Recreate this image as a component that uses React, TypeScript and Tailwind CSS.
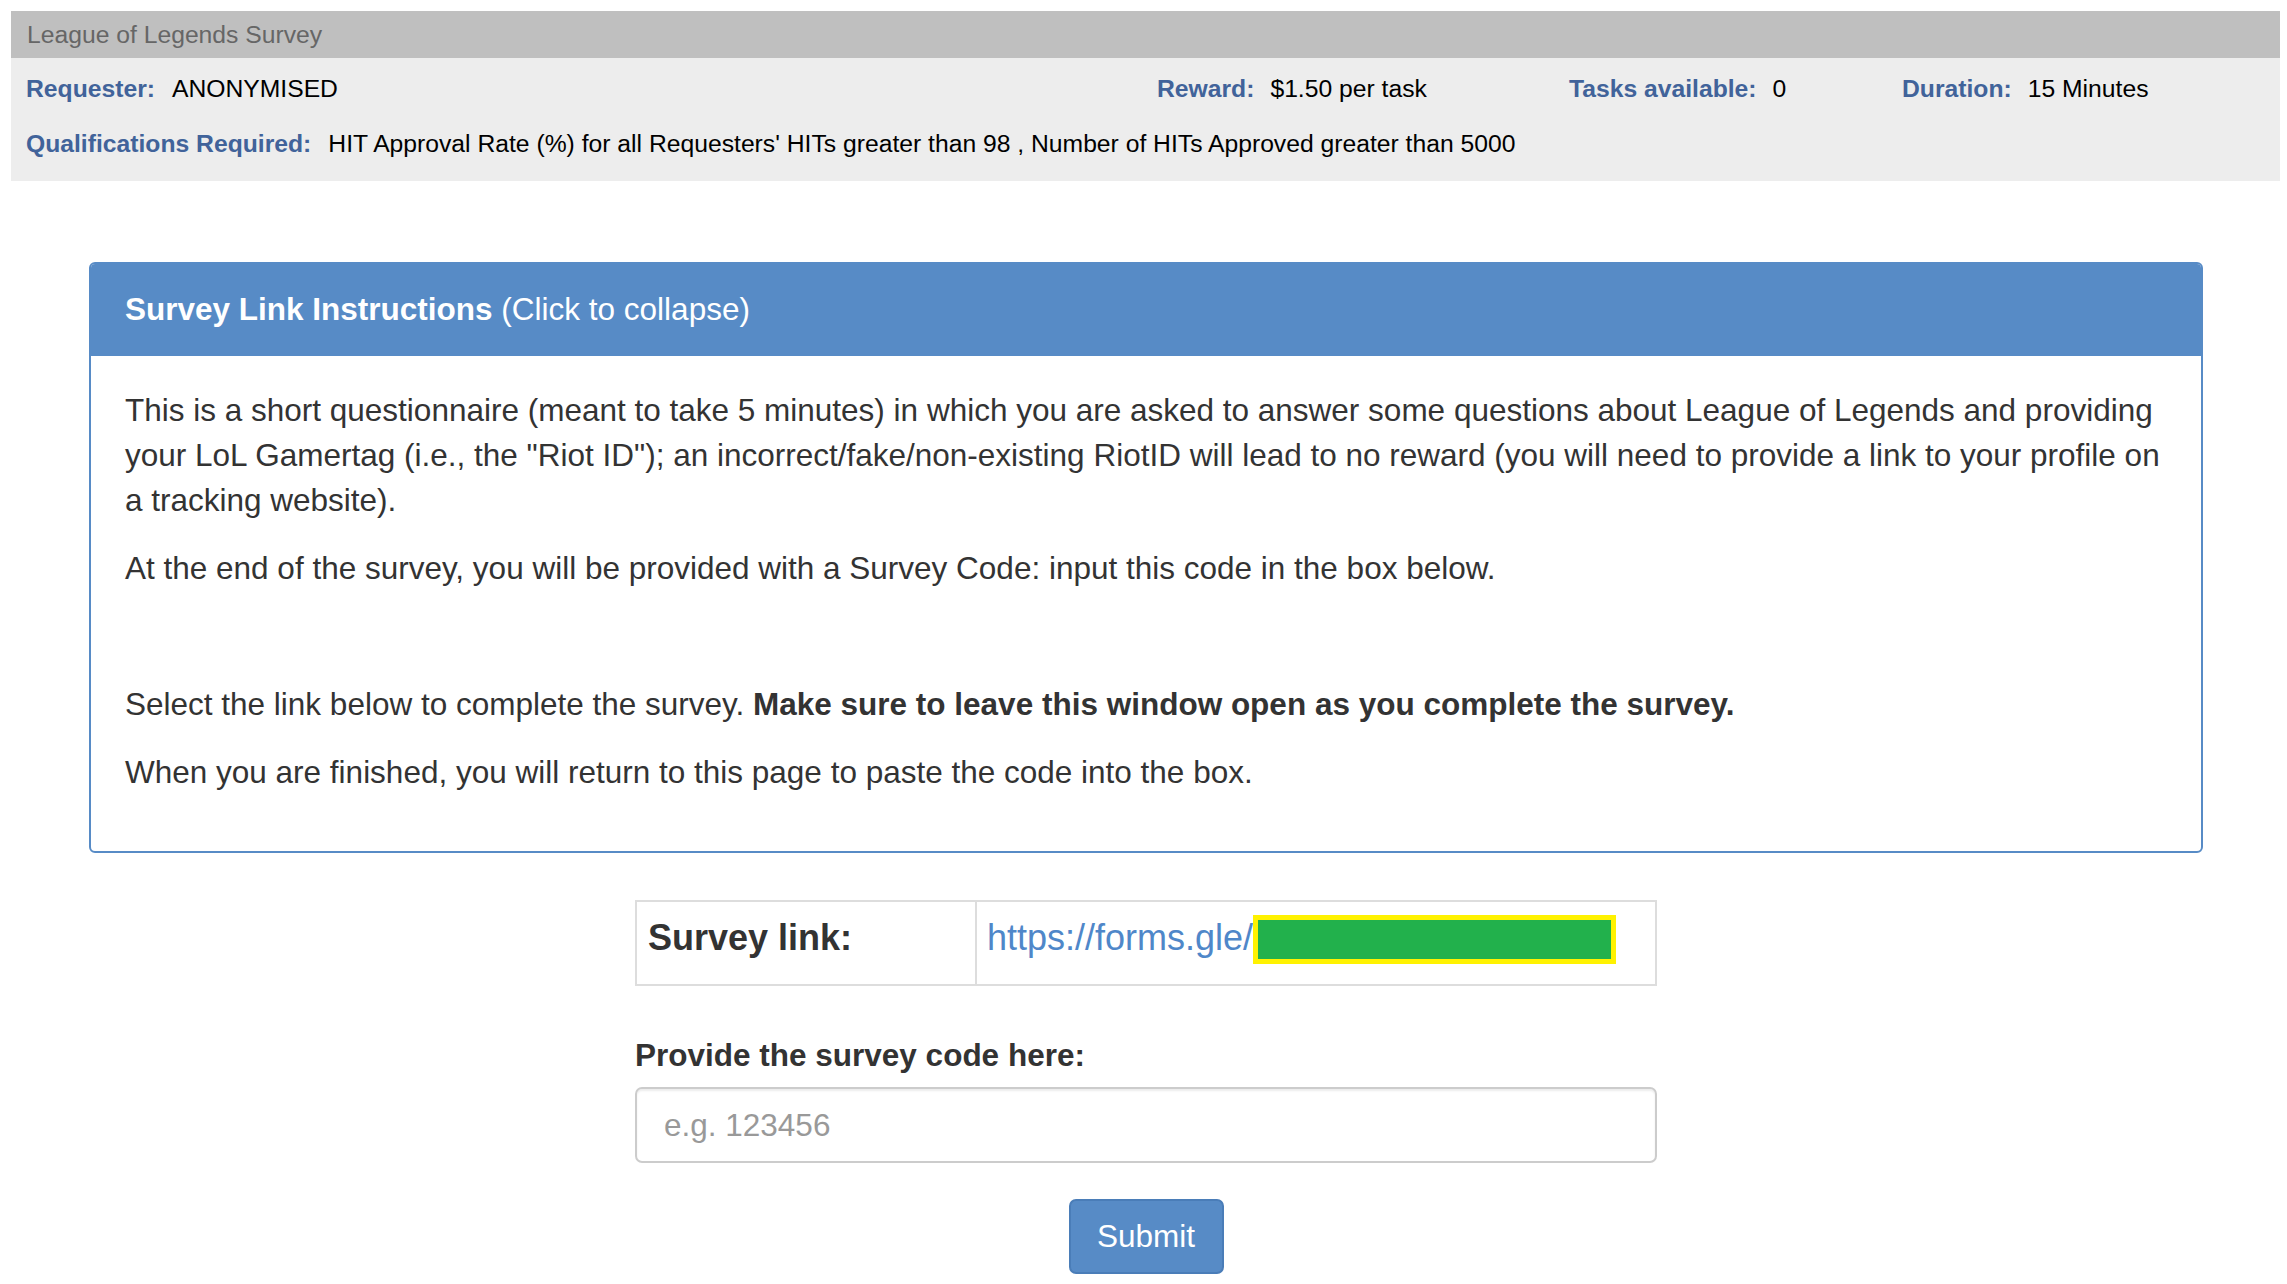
const label = "font-bold text-[#41639a]";

const App = () => {
  return (
    <div className="min-h-screen bg-white pt-[11px] pb-[10px] font-['Liberation_Sans',Arial,sans-serif]">
      {/* HIT info header */}
      <div className="ml-[11px] w-[2269px] bg-[#ededed]">
        <div className="flex h-[47px] items-center bg-[#bfbfbf] pl-[16px] text-[24.7px] text-[#666]">
          League of Legends Survey
        </div>
        <div className="px-[15px] pt-[14px] pb-[20px] text-[24.7px] leading-[34px] text-black">
          <div className="flex">
            <div className="w-[1131px]">
              <span className={label}>Requester:</span>
              <span className="ml-[17px]">ANONYMISED</span>
            </div>
            <div className="w-[412px]">
              <span className={label}>Reward:</span>
              <span className="ml-[16px]">$1.50 per task</span>
            </div>
            <div className="w-[333px]">
              <span className={label}>Tasks available:</span>
              <span className="ml-[16px]">0</span>
            </div>
            <div>
              <span className={label}>Duration:</span>
              <span className="ml-[16px]">15 Minutes</span>
            </div>
          </div>
          <div className="mt-[21px]">
            <span className={label}>Qualifications Required:</span>
            <span className="ml-[17px]">
              HIT Approval Rate (%) for all Requesters' HITs greater than 98 , Number of HITs Approved greater than 5000
            </span>
          </div>
        </div>
      </div>

      {/* Instructions panel */}
      <div className="mt-[81px] ml-[89px] w-[2114px] overflow-hidden rounded-[6px] border-2 border-[#578bc6]">
        <div className="flex h-[92px] items-center bg-[#578bc6] px-[34px] text-[31.5px] text-white">
          <span className="font-bold">Survey Link Instructions</span>
          <span>&nbsp;(Click to collapse)</span>
        </div>
        <div className="px-[34px] pt-[32px] pb-[33px] text-[31.5px] leading-[45px] text-[#333]">
          <p className="mb-[23px]">
            This is a short questionnaire (meant to take 5 minutes) in which you are asked to answer some questions
            about League of Legends and providing your LoL Gamertag (i.e., the "Riot ID"); an incorrect/fake/non-existing
            RiotID will lead to no reward (you will need to provide a link to your profile on a tracking website).
          </p>
          <p className="mb-[23px]">
            At the end of the survey, you will be provided with a Survey Code: input this code in the box below.
          </p>
          <p className="mb-[23px]">&nbsp;</p>
          <p className="mb-[23px]">
            Select the link below to complete the survey.{" "}
            <strong>Make sure to leave this window open as you complete the survey.</strong>
          </p>
          <p className="mb-[23px]">When you are finished, you will return to this page to paste the code into the box.</p>
        </div>
      </div>

      {/* Link + code form */}
      <div className="ml-[89px] flex w-[2114px] flex-col items-center">
        <div className="mt-[47px] flex h-[86px] w-[1022px] border-2 border-[#ddd]">
          <div className="w-[340px] border-r-2 border-[#ddd] pt-[11px] pl-[11px] text-[36px] leading-[50px] font-bold text-[#333]">
            Survey link:
          </div>
          <div className="flex flex-1 items-start pt-[11px] pl-[10px]">
            <span className="text-[36px] leading-[50px] text-[#4f87c9]">https://forms.gle/</span>
            <span className="mt-[2px] h-[49px] w-[363px] border-[5px] border-[#fff200] bg-[#22b14c]"></span>
          </div>
        </div>

        <div className="w-[1022px]">
          <div className="mt-[47px] text-[31.5px] leading-[45px] font-bold text-[#333]">
            Provide the survey code here:
          </div>
          <input
            type="text"
            placeholder="e.g. 123456"
            className="mt-[9px] h-[76px] w-full rounded-[7px] border-2 border-[#ccc] pl-[27px] text-[31.5px] text-[#555] shadow-[inset_0_2px_2px_rgba(0,0,0,0.075)] outline-none placeholder:text-[#999]"
          />
        </div>

        <button className="mt-[36px] h-[75px] w-[155px] rounded-[7px] border-2 border-[#4a7db8] bg-[#578bc6] text-[31.5px] text-white">
          Submit
        </button>
      </div>
    </div>
  );
};

export default App;
